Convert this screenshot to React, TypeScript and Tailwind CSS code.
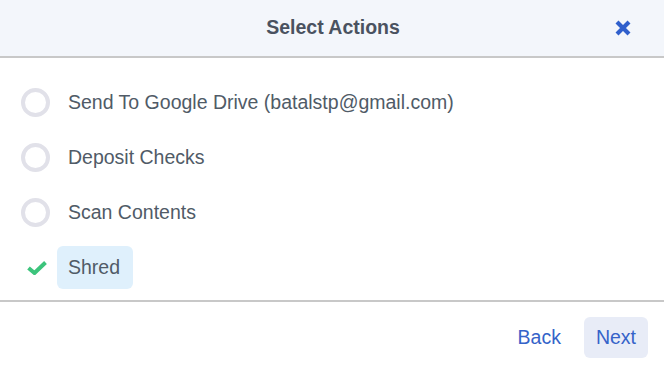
const options = [
  { id: 'drive', label: 'Send To Google Drive (batalstp@gmail.com)', checked: false },
  { id: 'deposit', label: 'Deposit Checks', checked: false },
  { id: 'scan', label: 'Scan Contents', checked: false },
  { id: 'shred', label: 'Shred', checked: true },
]

export default function App() {
  return (
    <div className="w-[664px] h-[367px] bg-white flex flex-col font-['Liberation_Sans',Arial,sans-serif]">
      {/* Header */}
      <div className="h-[58px] shrink-0 bg-[#f3f6fb] border-b-2 border-[#c8c8c8] relative flex items-center justify-center">
        <h2 className="text-[19.5px] font-bold text-[#4a5260] ml-[2px] -mt-[1px]">Select Actions</h2>
        <button className="absolute right-[32px] top-[19px] w-[18px] h-[18px] flex items-center justify-center">
          <svg viewBox="0 0 18 18" className="w-[18px] h-[18px]">
            <path d="M3 3 L15 15 M15 3 L3 15" stroke="#2f5fcc" strokeWidth="4.2" strokeLinecap="butt" />
          </svg>
        </button>
      </div>

      {/* Options */}
      <div className="pt-[17px] pb-[5px] border-b-2 border-[#c8c8c8]">
        {options.map((o) => (
          <div key={o.id} className="h-[55px] flex items-center px-[21px]">
            <div className="w-[29px] h-[29px] flex items-center justify-center shrink-0">
              {o.checked ? (
                <svg viewBox="0 0 20 14" className="w-[20px] h-[14px] ml-[2px]">
                  <path d="M1.5 7 L7.5 12 L18.5 1.5" stroke="#3cc47c" strokeWidth="4" fill="none" />
                </svg>
              ) : (
                <div className="w-[29px] h-[29px] rounded-full border-4 border-[#e1e1e9]" />
              )}
            </div>
            <span
              className={
                'ml-[7px] pl-[11px] pr-[13px] h-[43px] flex items-center rounded-md text-[19.5px] text-[#505b67] ' +
                (o.checked ? 'bg-[#dff0fc]' : '')
              }
            >
              {o.label}
            </span>
          </div>
        ))}
      </div>

      {/* Footer */}
      <div className="flex-1 flex items-start justify-end gap-[11px] pt-[15px] pr-4">
        <button className="h-[41px] px-3 text-[19.5px] text-[#3563c9] rounded-md">Back</button>
        <button className="h-[41px] px-3 text-[19.5px] text-[#3563c9] rounded-md bg-[#e8ecf7]">Next</button>
      </div>
    </div>
  )
}
